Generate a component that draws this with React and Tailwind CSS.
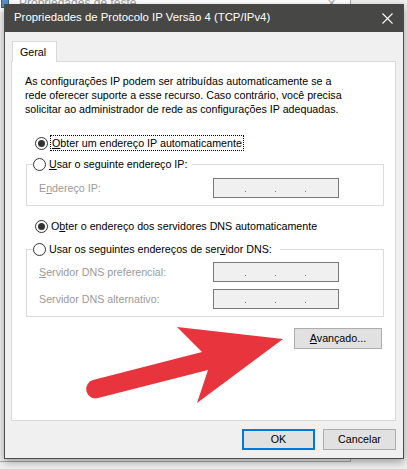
const font = { fontFamily: '"Liberation Sans", Arial, sans-serif' };

const Radio = ({ checked }) => (
  <span className="w-[13px] h-[13px] rounded-full border border-[#333] bg-white flex items-center justify-center shrink-0">
    {checked && <span className="w-[7px] h-[7px] rounded-full bg-[#333]"></span>}
  </span>
);

const IpBox = () => (
  <div className="w-[126px] h-[20px] border border-[#7a7a7a] bg-[#f0f0f0] flex items-start pl-[31px] pt-[12px] gap-[29px]">
    <span className="w-px h-px bg-[#777]"></span>
    <span className="w-px h-px bg-[#777]"></span>
    <span className="w-px h-px bg-[#777]"></span>
  </div>
);

const Row = ({ children }) => (
  <div className="flex items-center h-[20px] pl-[12px]">
    <span className="w-[174px] text-[#9a9a9a]">{children}</span>
    <IpBox />
  </div>
);

const Arrow = () => (
  <svg className="absolute left-0 top-0 pointer-events-none" width="407" height="469" viewBox="0 0 407 469">
    <path
      d="M 202 352 L 177 327 L 283 339 L 197 403 L 208 370 L 98 398 A 9 9 0 0 1 93 380 Z"
      fill="#e8353d"
    />
  </svg>
);

export default function App() {
  return (
    <div className="relative w-[407px] h-[469px] bg-[#efefef] overflow-hidden text-[10.7px] text-black" style={font}>
      {/* janela de trás */}
      <div className="absolute left-0 -top-[6px] w-[351px] h-[468px] bg-[#f0f0f0] border-r border-b border-[#a9a9a9]">
        <div className="h-[18px] bg-white flex items-center gap-[10px] pl-[1px]">
          <span className="w-[8px] h-[10px] bg-[#5b8fc7] border border-[#2f5f99]"></span>
          <span className="text-[#9a9a9a] text-[12px] leading-[12px]">Propriedades de teste</span>
          <span className="ml-auto mr-[14px] text-[#aaa] text-[11px] leading-[11px]">✕</span>
        </div>
      </div>

      {/* diálogo */}
      <div className="absolute left-[4px] top-[4px] w-[400px] h-[455px] bg-[#f0f0f0] border-x border-b border-[#4d4d4d] shadow-[0_3px_8px_rgba(0,0,0,0.35)] flex flex-col">
        <div className="h-[28px] bg-[#474745] text-white flex items-center pl-[9px] pr-[10px] shrink-0">
          <span className="text-[11.4px]">Propriedades de Protocolo IP Versão 4 (TCP/IPv4)</span>
          <svg className="ml-auto" width="11" height="11" viewBox="0 0 11 11">
            <path d="M0.5 0.5 L10.5 10.5 M10.5 0.5 L0.5 10.5" stroke="#fff" strokeWidth="1.1" />
          </svg>
        </div>

        <div className="flex flex-col pl-[6px] pr-[7px] pt-[9px]">
          <div className="relative z-10 ml-[1px] -mb-px w-[45px] h-[21px] bg-white border-x border-t border-[#d9d9d9] flex items-center pl-[7px]">
            Geral
          </div>

          <div className="h-[360px] bg-white border border-[#d9d9d9] flex flex-col">
            <p className="pl-[13px] pt-[12px] leading-[14px]">
              As configurações IP podem ser atribuídas automaticamente se a<br />
              rede oferecer suporte a esse recurso. Caso contrário, você precisa<br />
              solicitar ao administrador de rede as configurações IP adequadas.
            </p>

            <div className="mt-[19px] ml-[23px] h-[16px] flex items-center gap-[2px]">
              <Radio checked />
              <span className="border border-dotted border-black px-px leading-[14px]">
                <u>O</u>bter um endereço IP automaticamente
              </span>
            </div>

            <fieldset className="mt-[5px] ml-[14px] w-[358px] border border-[#dcdcdc] pl-[6px] pr-[8px] pb-[7px]">
              <legend className="h-[16px]">
                <span className="flex items-center gap-[3px] pr-[5px] leading-[16px]">
                  <Radio />
                  <span><u>U</u>sar o seguinte endereço IP:</span>
                </span>
              </legend>
              <div className="mt-[6px] -ml-[6px]">
                <Row>
                  E<u>n</u>dereço IP:
                </Row>
              </div>
            </fieldset>

            <div className="mt-[12px] ml-[23px] h-[16px] flex items-center gap-[3px]">
              <Radio checked />
              <span>O<u>b</u>ter o endereço dos servidores DNS automaticamente</span>
            </div>

            <fieldset className="mt-[7px] ml-[14px] w-[358px] border border-[#dcdcdc] pl-[6px] pr-[8px] pb-[7px]">
              <legend className="h-[16px]">
                <span className="flex items-center gap-[3px] pr-[8px] leading-[16px]">
                  <Radio />
                  <span>Usar os seguintes endereços de ser<u>v</u>idor DNS:</span>
                </span>
              </legend>
              <div className="mt-[5px] -ml-[6px] flex flex-col gap-[7px]">
                <Row>
                  <u>S</u>ervidor DNS preferencial:
                </Row>
                <Row>Servidor DNS alternativo:</Row>
              </div>
            </fieldset>

            <div className="mt-[11px] mr-[13px] flex justify-end">
              <button className="w-[88px] h-[21px] bg-[#e1e1e1] border border-[#adadad] text-center">
                <u>A</u>vançado...
              </button>
            </div>
          </div>

          <div className="mt-[8px] flex justify-end gap-[8px]">
            <button className="w-[73px] h-[21px] bg-[#e1e1e1] border-2 border-[#0078d7]">OK</button>
            <button className="w-[73px] h-[21px] bg-[#e1e1e1] border border-[#adadad]">Cancelar</button>
          </div>
        </div>
      </div>

      <Arrow />
    </div>
  );
}
